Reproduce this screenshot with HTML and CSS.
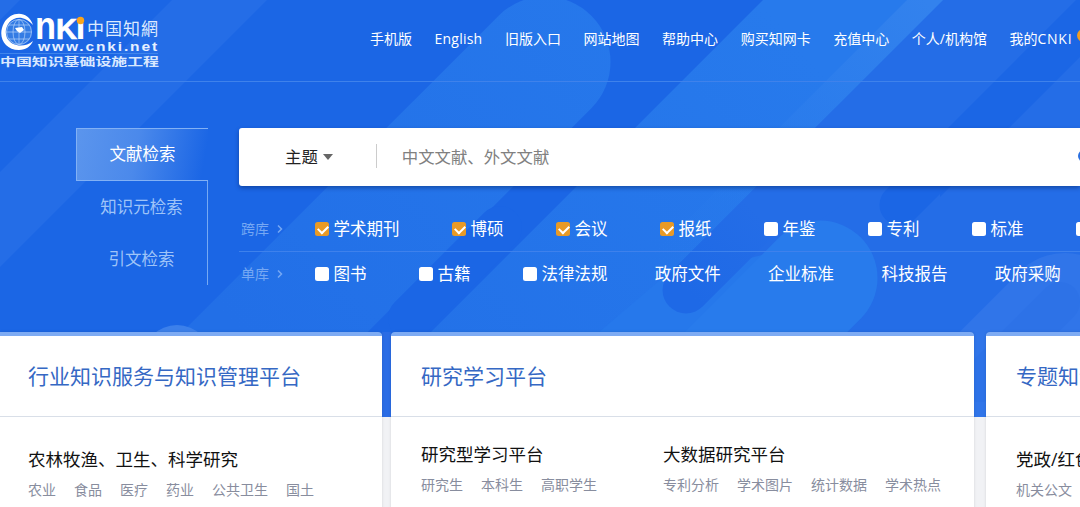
FILE: index.html
```
<!DOCTYPE html>
<html lang="zh-CN">
  <head>
    <meta charset="UTF-8" />
    <meta name="viewport" content="width=device-width, initial-scale=1.0" />
    <title>中国知网</title>
    <link rel="stylesheet" href="styles.css">
  </head>
  <body>
    <div class="banner">
      <!-- diagonal stripes behind the header -->
      <svg class="banner-bg" width="1080" height="417" viewBox="0 0 1080 417">
        <defs>
          <linearGradient id="stripe" gradientUnits="userSpaceOnUse" x1="300" y1="400" x2="760" y2="0">
            <stop offset="0" stop-color="#226fe7" />
            <stop offset="1" stop-color="#277aec" />
          </linearGradient>
          <linearGradient id="edge" gradientUnits="userSpaceOnUse" x1="925" y1="0" x2="655" y2="270">
            <stop offset="0" stop-color="#3382ed" />
            <stop offset="1" stop-color="#277aec" stop-opacity="0" />
          </linearGradient>
          <linearGradient id="dark" gradientUnits="userSpaceOnUse" x1="760" y1="216" x2="686" y2="290">
            <stop offset="0" stop-color="#246de7" />
            <stop offset="1" stop-color="#1e69e6" />
          </linearGradient>
        </defs>
        <rect width="1080" height="417" fill="#1b66e5" />
        <path d="M172 0H267L0 267V172Z" fill="#246de7" />
        <path d="M0 0H20L0 20Z" fill="#246de7" />
        <path d="M943 0H1080L663 417H526Z" fill="#246de7" />
        <path d="M1080 57V417H720Z" fill="#246de7" />
        <path d="M880 180H940V417H700V300Z" fill="#246de7" />
        <path d="M1220 -115L900 205" stroke="#1b66e5" stroke-width="41" stroke-linecap="round" />
        <path d="M545 62L100 507" stroke="url(#stripe)" stroke-width="131" stroke-linecap="round" />
        <path d="M763 0H943L526 417H346Z" fill="url(#stripe)" />
        <path d="M660 280L500 417H740L820 320L762 255Z" fill="#2678eb" />
        <path d="M820 278L660 438" stroke="#287bec" stroke-width="115" stroke-linecap="round" />
        <path d="M850 126L686 290" stroke="url(#dark)" stroke-width="47" stroke-linecap="round" />
        <path d="M907 0H943L673 270H637Z" fill="url(#edge)" />
        <path d="M500 228L410 318" stroke="#1b66e5" stroke-width="44" stroke-linecap="round" />
        <path d="M1065 317L965 417" stroke="#3075e9" stroke-width="128" stroke-linecap="round" />
        <path d="M1060 302L980 382" stroke="#286ee6" stroke-width="40" stroke-linecap="round" opacity=".35" />
        <circle cx="177" cy="360" r="35" fill="#3c80eb" />
        <rect x="382" y="332" width="9" height="85" fill="#2a6ce5" />
      </svg>

      <div class="header">
        <svg class="logo" width="162" height="72" viewBox="0 0 162 72">
          <circle cx="19" cy="32" r="13" fill="#347ce4" />
          <g fill="none" stroke="#b5d2fa" stroke-width=".7">
            <circle cx="19" cy="32" r="12.5" />
            <ellipse cx="19" cy="32" rx="6" ry="12.5" />
            <path d="M6.5 32H31.500M8.500 25H29.500M8.500 39H29.500M19 19.500V44.500" />
          </g>
          <path d="M15 28L22 27L24 30L20 33L17 31Z" fill="#fff" />
          <path d="M33 25C28 10 11 11 4 23C-3 36 4 50 19 50C26 50 31 46 33 41C25 48 12 47 7 38C1 24 18 8 33 25Z" fill="#fff" />
          <text class="logo-main" x="35" y="39" textLength="21" lengthAdjust="spacingAndGlyphs">n</text>
          <text class="logo-main logo-k" x="56" y="39" textLength="21" lengthAdjust="spacingAndGlyphs">K</text>
          <text class="logo-main logo-i" x="75.500" y="39" textLength="10" lengthAdjust="spacingAndGlyphs">ı</text>
          <circle cx="80.500" cy="20.500" r="3.700" fill="#f9a41c" />
          <text class="logo-name" x="87" y="34.500" textLength="71">中国知網</text>
          <text class="logo-url" x="38" y="50.500" textLength="121" lengthAdjust="spacingAndGlyphs">www.cnki.net</text>
          <path d="M0 53.500H158" stroke="#3f85ec" />
          <text class="logo-sub" x="0" y="65.500" textLength="159" lengthAdjust="spacingAndGlyphs">中国知识基础设施工程</text>
        </svg>
        <div class="nav">
          <a>手机版</a>
          <a class="en">English</a>
          <a>旧版入口</a>
          <a>网站地图</a>
          <a>帮助中心</a>
          <a>购买知网卡</a>
          <a>充值中心</a>
          <a>个人/机构馆</a>
          <a class="mine">我的<span class="en">CNKI</span><span class="badge"></span></a>
        </div>
      </div>

      <div class="search">
        <div class="tabs">
          <div class="tab active">文献检索</div>
          <div class="tab">知识元检索</div>
          <div class="tab">引文检索</div>
        </div>
        <div class="search-main">
          <div class="search-box">
            <span class="sort">主题</span>
            <span class="arrow"></span>
            <span class="divider"></span>
            <span class="placeholder">中文文献、外文文献</span>
            <span class="search-btn"></span>
          </div>
          <div class="row">
            <span class="row-name">跨库</span>
            <svg class="chevron" width="6" height="8" viewBox="0 0 6 8"><path d="M1 .5L4.500 4L1 7.500" /></svg>
            <div class="items">
              <label><i class="box checked"></i>学术期刊</label>
              <label><i class="box checked"></i>博硕</label>
              <label><i class="box checked"></i>会议</label>
              <label><i class="box checked"></i>报纸</label>
              <label><i class="box"></i>年鉴</label>
              <label><i class="box"></i>专利</label>
              <label><i class="box"></i>标准</label>
              <label><i class="box"></i></label>
            </div>
          </div>
          <div class="row">
            <span class="row-name">单库</span>
            <svg class="chevron" width="6" height="8" viewBox="0 0 6 8"><path d="M1 .5L4.500 4L1 7.500" /></svg>
            <div class="items">
              <label><i class="box"></i>图书</label>
              <label><i class="box"></i>古籍</label>
              <label class="last-box"><i class="box"></i>法律法规</label>
              <a>政府文件</a>
              <a>企业标准</a>
              <a>科技报告</a>
              <a>政府采购</a>
            </div>
          </div>
        </div>
      </div>
    </div>

    <!-- platform cards -->
    <div class="cards">
      <div class="card card-left">
        <h2>行业知识服务与知识管理平台</h2>
        <div class="card-body">
          <div class="group">
            <h3>农林牧渔、卫生、科学研究</h3>
            <div class="links"><a>农业</a><a>食品</a><a>医疗</a><a>药业</a><a>公共卫生</a><a>国土</a></div>
          </div>
        </div>
      </div>
      <div class="card card-center">
        <h2>研究学习平台</h2>
        <div class="card-body">
          <div class="group">
            <h3>研究型学习平台</h3>
            <div class="links"><a>研究生</a><a>本科生</a><a>高职学生</a></div>
          </div>
          <div class="group">
            <h3>大数据研究平台</h3>
            <div class="links"><a>专利分析</a><a>学术图片</a><a>统计数据</a><a>学术热点</a></div>
          </div>
        </div>
      </div>
      <div class="card card-right">
        <h2>专题知识</h2>
        <div class="card-body">
          <div class="group">
            <h3>党政/红色</h3>
            <div class="links"><a>机关公文</a></div>
          </div>
        </div>
      </div>
    </div>
  </body>
</html>
```
FILE: styles.css
```
* {
  box-sizing: border-box;
}

body {
  margin: 0;
  height: 507px;
  overflow: hidden;
  background: #f1f2f5;
  font-family: "Open Sans", "Noto Sans CJK SC", sans-serif;
  font-size: 14px;
  white-space: nowrap;
}

.banner {
  position: relative;
  height: 332px;
  overflow-x: clip;
}

.banner-bg {
  position: absolute;
  top: 0;
  left: 0;
  z-index: -1;
}

.header {
  display: flex;
  justify-content: space-between;
  height: 82px;
  border-bottom: 1px solid #3f82eb;
}

.logo-main {
  font: bold 38px "Liberation Sans", sans-serif;
  fill: #fff;
}

.logo-k {
  font-size: 30px;
  stroke: #fff;
  stroke-width: 0.7;
}

.logo-i {
  font-size: 29px;
}

.logo-name {
  font: 17px "Noto Sans CJK SC", sans-serif;
  fill: #dceafe;
}

.logo-url {
  font: bold 12.5px "Liberation Sans", sans-serif;
  letter-spacing: 1.5px;
  fill: #e6f0ff;
}

.logo-sub {
  font: bold 11px "Noto Sans CJK SC", sans-serif;
  fill: #d9e8ff;
}

.nav {
  display: flex;
  gap: 22.6px;
  width: 710px;
  line-height: 20px;
  padding-top: 29px;
  color: #fff;
}

.en {
  letter-spacing: 0.2px;
}

.mine {
  position: relative;
}

.mine .en {
  letter-spacing: 0.7px;
}

.badge {
  position: absolute;
  top: 0;
  left: 67px;
  width: 20px;
  height: 13px;
  border-radius: 7px;
  background: #f29d20;
}

.search {
  display: flex;
  gap: 31px;
  padding: 46px 0 0 76px;
}

.tabs {
  width: 132px;
  height: 157px;
  font-size: 16.5px;
  text-align: center;
  color: #9fc4f8;
}

.tab {
  height: 52px;
  line-height: 52px;
  border-right: 1px solid #76a9f3;
}

.tab.active {
  height: 53px;
  line-height: 50px;
  color: #fff;
  border: 1px solid #82b1f5;
  border-right: none;
  background: linear-gradient(100deg, #5b95ed, #4b89eb 45%, #1b66e5 95%);
}

.search-main {
  flex: 1;
  min-width: 0;
}

.search-box {
  display: flex;
  align-items: center;
  height: 58px;
  padding: 0 0 2px 46px;
  border-radius: 3px 0 0 3px;
  background: #fff;
  box-shadow: 0 2px 4px rgba(0, 30, 90, 0.45);
  font-size: 16.4px;
  overflow: hidden;
}

.sort {
  color: #222;
}

.arrow {
  margin: 2px 0 0 5px;
  border: 5.5px solid transparent;
  border-top: 6px solid #666;
  border-bottom: none;
}

.divider {
  width: 1px;
  height: 24px;
  margin: 0 25px 0 43px;
  background: #ccc;
}

.placeholder {
  color: #808080;
}

.search-btn {
  width: 12px;
  height: 12px;
  margin-left: auto;
  margin-right: -10px;
  border-radius: 50%;
  background: #2a6fe0;
}

.row {
  display: flex;
  align-items: center;
  height: 42px;
  padding-left: 2px;
  overflow: hidden;
  color: #fff;
}

.search-box + .row {
  height: 66px;
  padding-top: 18px;
  border-bottom: 1px solid #3e81ec;
}

.row-name {
  color: #76a8f3;
}

.chevron {
  flex: none;
  margin: 2px 32px 0 8px;
  fill: none;
  stroke: #76a8f3;
  stroke-width: 1.5;
}

.items {
  display: flex;
  font-size: 16.5px;
}

.items label {
  display: flex;
  align-items: center;
  margin-right: 52.5px;
}

.items .last-box {
  margin-right: 47.3px;
}

.items a {
  margin-right: 47.3px;
}

.box {
  position: relative;
  width: 14px;
  height: 14px;
  margin: 2px 4.5px 0 0;
  border-radius: 2.5px;
  background: #fff;
}

.box.checked {
  background: #e89a26;
}

.box.checked::after {
  content: "";
  position: absolute;
  left: 3px;
  top: 3px;
  width: 8px;
  height: 5px;
  border-left: 2px solid #fff;
  border-bottom: 2px solid #fff;
  transform: rotate(-45deg);
}

.cards {
  display: flex;
  height: 175px;
  overflow-x: clip;
}

.card {
  flex: none;
  height: 200px;
  border-top: 4px solid #7eabf3;
  border-radius: 4px 4px 0 0;
  background: #fff;
  box-shadow: 0 0 3px rgba(0, 0, 0, 0.12);
}

.card-left {
  width: 382px;
  margin-right: 9px;
  border-top-left-radius: 0;
}

.card-center {
  width: 583px;
  margin-right: 12px;
}

.card-right {
  width: 300px;
}

.card h2 {
  height: 81px;
  margin: 0;
  padding-left: 30px;
  border-bottom: 1px solid #d9dfe8;
  font-size: 21px;
  font-weight: normal;
  line-height: 81px;
  color: #3568c4;
}

.card-left h2 {
  padding-left: 28px;
}

.card-body {
  display: flex;
  padding: 30px 0 0 30px;
}

.card-left .card-body {
  padding-left: 28px;
}

.card-center .card-body {
  padding-top: 25px;
}

.card-center .group {
  width: 242px;
}

.card h3 {
  margin: 0;
  font-size: 17.5px;
  font-weight: normal;
  line-height: 24px;
  color: #111;
}

.links {
  display: flex;
  gap: 18px;
  margin-top: 9px;
  line-height: 20px;
  color: #888d9e;
}
```
